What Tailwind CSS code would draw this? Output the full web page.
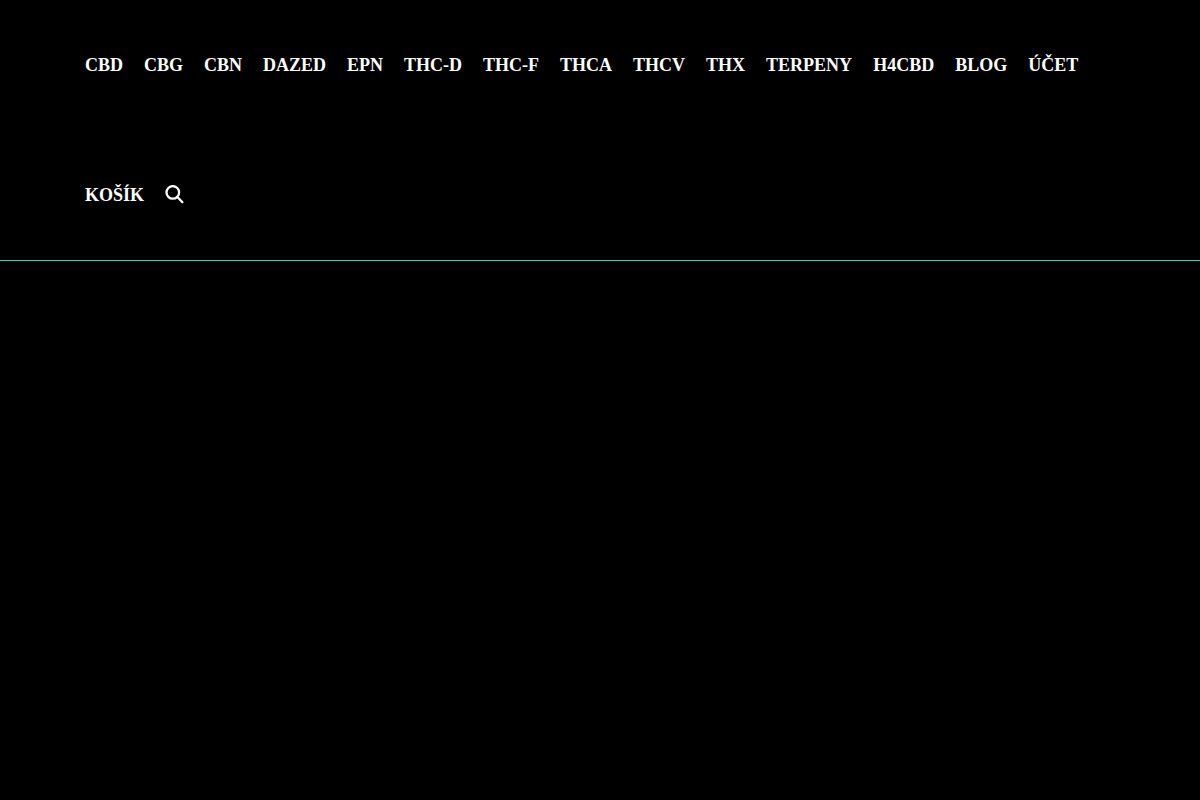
<!DOCTYPE html>
<html lang="cs">
<head>
    <meta charset="UTF-8" />
    <meta name="viewport" content="width=device-width, initial-scale=1.0">
    <title>E-shop</title>
    <script src="https://cdn.jsdelivr.net/npm/@tailwindcss/browser@4"></script>
</head>
<body class="min-h-screen bg-black text-white font-['Liberation_Serif',serif]">

    <!-- Header -->
    <header class="border-b border-[#20d9b8]">
        <nav class="max-w-[1080px] mx-auto px-[25px]" aria-label="Menu">
            <ul class="flex flex-wrap gap-x-[21px] text-[18px] font-bold leading-[130px]">
                <li><a href="#">CBD</a></li>
                <li><a href="#">CBG</a></li>
                <li><a href="#">CBN</a></li>
                <li><a href="#">DAZED</a></li>
                <li><a href="#">EPN</a></li>
                <li><a href="#">THC-D</a></li>
                <li><a href="#">THC-F</a></li>
                <li><a href="#">THCA</a></li>
                <li><a href="#">THCV</a></li>
                <li><a href="#">THX</a></li>
                <li><a href="#">TERPENY</a></li>
                <li><a href="#">H4CBD</a></li>
                <li><a href="#">BLOG</a></li>
                <li><a href="#">ÚČET</a></li>
                <li><a href="#">KOŠÍK</a></li>
                <li class="flex items-center">
                    <button type="button" aria-label="Hledat" class="cursor-pointer">
                        <svg class="size-5" viewBox="0 0 20 20" fill="none" stroke="currentColor" stroke-width="2.3" stroke-linecap="round">
                            <circle cx="7.8" cy="7.4" r="6.3" />
                            <path d="M12.4 12L17.4 17.2" />
                        </svg>
                    </button>
                </li>
            </ul>
        </nav>
    </header>

    <main></main>

</body>
</html>
